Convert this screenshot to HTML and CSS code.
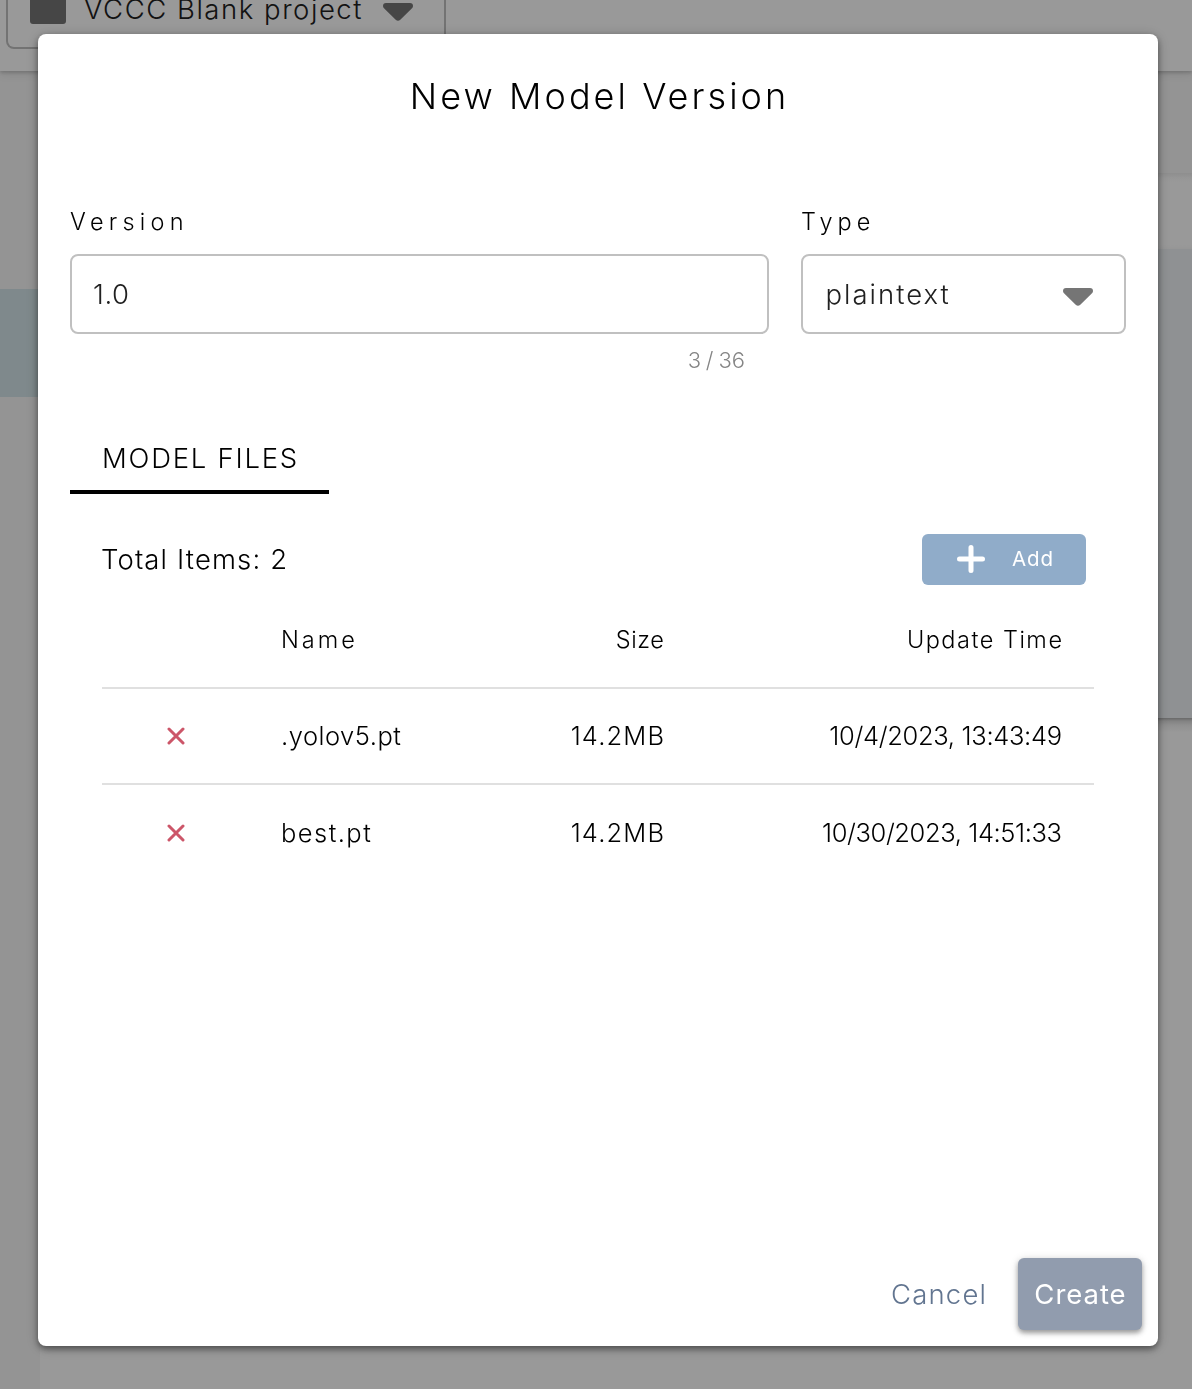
FILE: index.html
```html
<!DOCTYPE html>
<html lang="en">
<head>
<meta charset="utf-8">
<title>New Model Version</title>
<link rel="stylesheet" href="styles.css">
</head>
<body>
<div class="app">
  <header class="topbar">
    <div class="project-select">
      <span class="project-icon"></span>
      <span class="t project-name">VCCC Blank project</span>
      <svg class="caret" width="30" height="18" viewBox="0 0 30 18"><path d="M3 0H27Q30 0 30 3Q30 4.300 29 5.300L17.300 16.700Q15 19 12.700 16.700L1 5.300Q0 4.300 0 3Q0 0 3 0Z"/></svg>
    </div>
  </header>
  <div class="workspace">
    <aside class="sidebar"><div class="sidebar-active"></div></aside>
    <main class="content">
      <div class="content-head"></div>
      <div class="content-bar"></div>
      <div class="content-panel"></div>
      <div class="content-rest"></div>
    </main>
  </div>
</div>
<div class="overlay">
  <section class="dialog" role="dialog" aria-labelledby="dialog-title">
    <h1 class="title" id="dialog-title"><span class="t title-text">New Model Version</span></h1>
    <div class="fields">
      <div class="field">
        <div class="label"><span class="t version-label">Version</span></div>
        <div class="control"><span class="t version-value">1.0</span></div>
        <div class="hint"><span class="t hint-text">3 / 36</span></div>
      </div>
      <div class="field">
        <div class="label"><span class="t type-label">Type</span></div>
        <div class="control select"><span class="t type-value">plaintext</span>
          <svg class="caret" width="30" height="18" viewBox="0 0 30 18"><path d="M3 0H27Q30 0 30 3Q30 4.300 29 5.300L17.300 16.700Q15 19 12.700 16.700L1 5.300Q0 4.300 0 3Q0 0 3 0Z"/></svg>
        </div>
      </div>
    </div>
    <div class="tab"><span class="t tab-text">MODEL FILES</span></div>
    <div class="summary">
      <span class="t total">Total Items: 2</span>
      <button class="add" type="button">
        <svg width="30" height="30" viewBox="0 0 30 30"><path d="M3.500 15H26.500M15 3.500V26.500"/></svg>
        <span class="t add-text">Add</span>
      </button>
    </div>
    <div class="table">
      <div class="row head"><span></span><span class="name"><span class="t h-name">Name</span></span><span class="num"><span class="t h-size">Size</span></span><span class="num"><span class="t h-time">Update Time</span></span></div>
      <div class="row"><svg class="remove" width="18" height="18" viewBox="0 0 18 18"><path d="M2 2L16 16M16 2L2 16"/></svg><span class="name"><span class="t yolo">.yolov5.pt</span></span><span class="num"><span class="t size">14.2MB</span></span><span class="num"><span class="t time-a">10/4/2023, 13:43:49</span></span></div>
      <div class="row"><svg class="remove" width="18" height="18" viewBox="0 0 18 18"><path d="M2 2L16 16M16 2L2 16"/></svg><span class="name"><span class="t best">best.pt</span></span><span class="num"><span class="t size">14.2MB</span></span><span class="num"><span class="t time-b">10/30/2023, 14:51:33</span></span></div>
    </div>
    <footer class="actions">
      <button class="cancel" type="button"><span class="t cancel-text">Cancel</span></button>
      <button class="create" type="button"><span class="t create-text">Create</span></button>
    </footer>
  </section>
</div>
</body>
</html>
```
FILE: styles.css
```css
* { box-sizing: border-box; }
body { margin: 0; height: 1389px; overflow: hidden; font-family: Inter, sans-serif; font-weight: 300; color: #000; }
button { font: inherit; border: 0; padding: 0; background: none; }

/* Tracking per text; the negative margin drops the space after the last letter. */
.t { --ls: 0px; white-space: pre; letter-spacing: var(--ls); margin-right: calc(-1 * var(--ls)); }
.title-text { --ls: 3.05px; }
.version-label { --ls: 5.25px; }
.type-label { --ls: 5px; }
.version-value { --ls: .6px; }
.type-value { --ls: 2px; margin-left: -.5px; }
.hint-text { word-spacing: -1.3px; }
.tab-text { --ls: 1.75px; }
.total { --ls: 1.12px; margin-left: -1px; }
.add-text { --ls: .9px; }
.h-name { --ls: 3px; }
.h-size { --ls: .65px; }
.h-time { --ls: 1.5px; }
.yolo { --ls: .5px; }
.best { --ls: 1.45px; }
.size { --ls: 1.15px; }
.time-a { --ls: -.33px; }
.time-b { --ls: -.4px; }
.cancel-text { --ls: 1.2px; }
.create-text { --ls: .95px; }

.app { display: flex; flex-direction: column; height: 1389px; background: #fff; }
.topbar { position: relative; height: 71px; flex: none; padding-left: 6px; background: #fff; box-shadow: 0 2px 3px rgba(0,0,0,.14), 0 3px 9px rgba(0,0,0,.1); }
.project-select { display: flex; align-items: flex-start; width: 440px; height: 49px; padding-left: 22px; border: 2px solid #c0c0c0; border-top: 0; border-radius: 0 0 8px 8px; }
.project-icon { width: 36px; height: 24px; background: #757575; border-radius: 0 0 3px 3px; }
.project-name { --ls: 1.53px; width: 280px; margin: -8px 0 0 18px; font-size: 27.5px; line-height: 34px; color: #212121; }
.project-select .caret { margin: 3px 0 0 19px; }
.caret { flex: none; fill: #757575; }
.workspace { display: flex; flex: 1; }
.sidebar { width: 40px; padding-top: 218px; background: #f7f7f7; }
.sidebar-active { height: 108px; background: #d4e5e9; }
.content { display: flex; flex-direction: column; flex: 1; }
.content-head { height: 102px; background: #f7f7f7; }
.content-bar { height: 76px; background: linear-gradient(#ededed, #fbfbfb 5px, #fff 9px, #fff 72px, #fafafa); }
.content-panel { height: 469px; background: #eef2f5; }
.content-rest { flex: 1; background: linear-gradient(#b0b0b0, #bcbcbc 1px, #dadada 3px, #efefef 7px, #fff 14px); }

.overlay { position: fixed; inset: 0; display: flex; align-items: flex-start; justify-content: center; padding: 34px 34px 43px 38px; background: rgba(0,0,0,.4); }
.dialog { display: flex; flex-direction: column; width: 1120px; height: 1312px; padding: 0 32px; background: #fff; border-radius: 8px; box-shadow: 0 3px 6px rgba(0,0,0,.4), 0 2px 14px rgba(0,0,0,.22); }
.title { margin: 38px 0 0; font-size: 36px; font-weight: 300; line-height: 48px; text-align: center; }
.fields { display: grid; grid-template-columns: 699px 325px; gap: 32px; margin-top: 86px; }
.label { height: 48px; font-size: 23.5px; line-height: 32px; }
.control { display: flex; align-items: center; height: 80px; padding: 0 21px; border: 2px solid #c0c0c0; border-radius: 8px; font-size: 27.5px; color: #212121; }
.select { justify-content: space-between; padding: 0 31px 0 23px; }
.select .caret { margin-top: 6px; }
.hint { height: 52px; padding-right: 24px; font-size: 22px; line-height: 53px; text-align: right; color: #858585; }
.tab { width: 259px; height: 68px; margin-top: 40px; padding-left: 32px; border-bottom: 4px solid #000; font-size: 27.5px; line-height: 64px; }
.summary { display: flex; align-items: center; justify-content: space-between; height: 51px; margin: 40px 40px 0 32px; font-size: 27.5px; }
.total { padding-bottom: 2px; }
.add { display: flex; align-items: center; width: 164px; height: 51px; padding: 0 0 1px 34px; border-radius: 6px; background: #90acc9; color: #fff; font-size: 20.5px; font-weight: 400; }
.add svg { margin-right: 26px; fill: none; stroke: #fff; stroke-width: 5; stroke-linecap: round; }
.add-text { padding-bottom: 1px; }
.table { margin: 6px 32px 0; }
.row { display: grid; grid-template-columns: 179px 250px 133px 398px; align-items: center; height: 96px; padding-bottom: 1px; font-size: 25.5px; }
.row.head { height: 98px; padding-bottom: 0; border-bottom: 2px solid #e0e0e0; font-size: 23.5px; }
.row.head + .row { border-bottom: 2px solid #e0e0e0; }
.num { text-align: right; }
.remove { margin-left: 64.5px; fill: none; stroke: #cc5669; stroke-width: 3; stroke-linecap: round; }
.actions { display: flex; gap: 32px; justify-content: flex-end; align-items: center; margin: auto -16px 16px; font-size: 27.5px; }
.cancel { color: #627590; }
.create { width: 124px; height: 72px; border-radius: 6px; background: #919cae; color: #fff; box-shadow: 0 3px 5px rgba(0,0,0,.35), 0 1px 10px rgba(0,0,0,.12); font-weight: 400; }
```
